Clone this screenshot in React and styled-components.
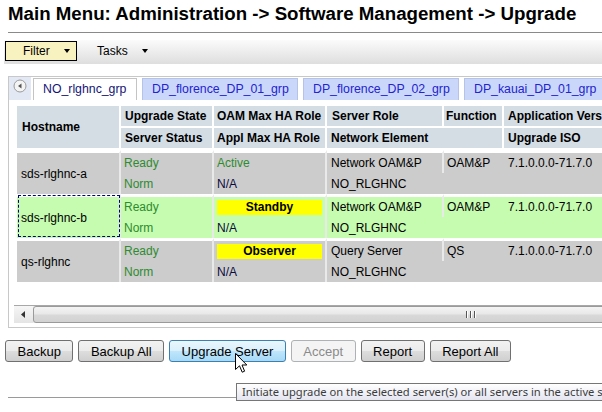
import styled, { createGlobalStyle } from "styled-components";

const GlobalStyle = createGlobalStyle`
  body {
    margin: 0;
    background: #fff;
    font-family: "Liberation Sans", Arial, sans-serif;
    font-size: 12px;
    color: #000;
  }
`;

const Page = styled.div`
  position: relative;
  width: 602px;
  height: 412px;
  overflow: hidden;
`;

const Title = styled.h1`
  margin: 0 0 0 8px;
  padding: 3px 0 7px 0;
  font-size: 18.7px;
  line-height: 22px;
  font-weight: bold;
  white-space: nowrap;
  border-bottom: 1px solid #8a8a8a;
`;

const Toolbar = styled.div`
  display: flex;
  align-items: flex-start;
  margin: 7px 0 0 4px;
  height: 24px;
  background: linear-gradient(#fbfbfb, #dedede);
`;

const MenuButton = styled.div`
  display: flex;
  align-items: center;
  box-sizing: border-box;
  height: 20px;
  margin: 1px 0 0 1px;
  width: ${(p) => p.$width}px;
  padding-left: ${(p) => p.$pad}px;
  border: 1px solid ${(p) => (p.$active ? "#000" : "transparent")};
  background: ${(p) => (p.$active ? "#f8f2c0" : "transparent")};
  font-size: 12px;
  gap: 14px;
`;

const Caret = styled.span`
  width: 0;
  height: 0;
  border-left: 3.5px solid transparent;
  border-right: 3.5px solid transparent;
  border-top: 4px solid #000;
`;

const Panel = styled.div`
  display: flex;
  flex-direction: column;
  box-sizing: border-box;
  height: 252px;
  margin: 12px 0 0 8px;
  border: 1px solid #c8c8c8;
  border-right: none;
  overflow: hidden;
`;

const TabStrip = styled.div`
  display: flex;
  align-items: flex-end;
  gap: 5px;
  height: 23px;
`;

const ScrollNub = styled.div`
  display: flex;
  justify-content: center;
  align-items: flex-start;
  flex-shrink: 0;
  width: 22px;
  height: 23px;
  margin-right: -3px;
  padding-top: 2px;
  box-sizing: border-box;
  background: #e3e8f5;
`;

const Tab = styled.div`
  box-sizing: border-box;
  height: 22px;
  width: ${(p) => p.$width}px;
  flex-shrink: 0;
  padding-left: 9px;
  line-height: 21px;
  font-size: 12.3px;
  white-space: nowrap;
  color: ${(p) => (p.$active ? "#141478" : "#2323d0")};
  background: ${(p) => (p.$active ? "#fff" : "#cad7fb")};
  border: 1px solid ${(p) => (p.$active ? "#c4c4c4" : "#b7c3e6")};
  border-bottom: none;
`;

const Grid = styled.table`
  table-layout: fixed;
  border-collapse: separate;
  border-spacing: 0;
  width: 627px;
  margin: 6px 0 0 8px;
`;

const Th = styled.th`
  height: 20px;
  padding: 0 0 0 ${(p) => p.$pad ?? 4}px;
  background: #d4dce4;
  border-right: 2px solid #fff;
  border-bottom: 2px solid #fff;
  text-align: left;
  font-size: 12px;
  font-weight: bold;
  white-space: nowrap;
  overflow: hidden;
`;

const Td = styled.td`
  height: ${(p) => (p.$first ? 20 : 21)}px;
  padding: 0 0 0 ${(p) => p.$pad ?? 4}px;
  background: ${(p) => (p.$tone === "green" ? "#c6fcb0" : "#cccccc")};
  border-top: ${(p) => (p.$first ? "3px solid #fff" : "none")};
  border-right: ${(p) => (p.$open ? "none" : "2px solid #e9e9e9")};
  color: ${(p) => p.$color || "#000"};
  font-size: 12px;
  white-space: nowrap;
  overflow: hidden;
  vertical-align: middle;
  outline: ${(p) => (p.$focus ? "1px dashed #000080" : "none")};
  outline-offset: -2px;
`;

const RoleBadge = styled.div`
  height: 15px;
  margin-right: 3px;
  background: #ffff00;
  text-align: center;
  font-weight: bold;
  line-height: 15px;
`;

const HScroll = styled.div`
  display: flex;
  height: 17px;
  margin: auto 0 4px 5px;
  background: #ececec;
  border-top: 1px solid #a8a8a8;
`;

const ScrollArrow = styled.div`
  display: flex;
  align-items: center;
  justify-content: center;
  width: 19px;
  flex-shrink: 0;
  background: linear-gradient(#f6f6f6, #e4e4e4);
`;

const ScrollThumb = styled.div`
  display: flex;
  align-items: center;
  justify-content: center;
  gap: 2px;
  width: 876px;
  flex-shrink: 0;
  box-sizing: border-box;
  border: 1px solid #9a9a9a;
  border-radius: 3px;
  background: linear-gradient(#f4f4f4 0%, #e8e8e8 45%, #d8d8d8 55%, #d2d2d2 100%);
`;

const GripLine = styled.span`
  width: 1px;
  height: 7px;
  background: #555;
  border-right: 1px solid #fff;
`;

const ButtonRow = styled.div`
  display: flex;
  gap: 5px;
  margin: 12px 0 0 5px;
`;

const Button = styled.button`
  box-sizing: border-box;
  height: 22px;
  padding: 0 11.5px;
  font-family: "Liberation Sans", Arial, sans-serif;
  font-size: 13px;
  border-radius: 3px;
  border: 1px solid ${(p) => (p.$hover ? "#3c7fb1" : p.disabled ? "#adb2b5" : "#707070")};
  color: ${(p) => (p.disabled ? "#8a8a8a" : "#000")};
  background: ${(p) =>
    p.$hover
      ? "linear-gradient(#eaf6fd 0%, #d9f0fc 50%, #bee6fd 51%, #a7d9f5 100%)"
      : p.disabled
      ? "#f4f4f4"
      : "linear-gradient(#f2f2f2 0%, #ebebeb 50%, #dddddd 51%, #cfcfcf 100%)"};
`;

const FooterRule = styled.div`
  margin: 35px 0 0 8px;
  border-top: 1px solid #9a9a9a;
`;

const Tooltip = styled.div`
  position: absolute;
  left: 236px;
  top: 383px;
  height: 18px;
  padding: 0 5px;
  box-sizing: border-box;
  border: 1px solid #767676;
  background: linear-gradient(#ffffff, #e4e5f0);
  font-family: "Noto Sans", "Open Sans", sans-serif;
  font-size: 11.2px;
  line-height: 16px;
  color: #3c3c3c;
  white-space: nowrap;
`;

const Cursor = styled.svg`
  position: absolute;
  left: 235px;
  top: 353px;
`;

const tabs = [
  { name: "NO_rlghnc_grp", width: 104, active: true },
  { name: "DP_florence_DP_01_grp", width: 156 },
  { name: "DP_florence_DP_02_grp", width: 156 },
  { name: "DP_kauai_DP_01_grp", width: 150 },
];

const servers = [
  { host: "sds-rlghnc-a", role: "Active", serverRole: "Network OAM&P", fn: "OAM&P", tone: "gray" },
  { host: "sds-rlghnc-b", role: "Standby", serverRole: "Network OAM&P", fn: "OAM&P", tone: "green", focus: true },
  { host: "qs-rlghnc", role: "Observer", serverRole: "Query Server", fn: "QS", tone: "gray" },
];

const GREEN = "#2e8b2e";
const NAVY = "#0b0b3c";

function ServerRows({ s }) {
  return (
    <>
      <tr>
        <Td rowSpan={2} $first $tone={s.tone} $focus={s.focus}>
          {s.host}
        </Td>
        <Td $first $tone={s.tone} $pad={3} $color={GREEN}>Ready</Td>
        <Td $first $tone={s.tone} $pad={3} $color={s.role === "Active" ? GREEN : "#000"}>
          {s.role === "Active" ? s.role : <RoleBadge>{s.role}</RoleBadge>}
        </Td>
        <Td $first $tone={s.tone}>{s.serverRole}</Td>
        <Td $first $tone={s.tone} $pad={3} $open>{s.fn}</Td>
        <Td $first $tone={s.tone} $open>7.1.0.0.0-71.7.0</Td>
      </tr>
      <tr>
        <Td $tone={s.tone} $pad={3} $color={GREEN}>Norm</Td>
        <Td $tone={s.tone} $pad={3} $color={NAVY}>N/A</Td>
        <Td colSpan={2} $tone={s.tone} $open>NO_RLGHNC</Td>
        <Td $tone={s.tone} $open></Td>
      </tr>
    </>
  );
}

export default function App() {
  return (
    <Page>
      <GlobalStyle />
      <Title>Main Menu: Administration -&gt; Software Management -&gt; Upgrade</Title>

      <Toolbar>
        <MenuButton $active $width={72} $pad={17}>
          Filter <Caret />
        </MenuButton>
        <MenuButton $width={70} $pad={18}>
          Tasks <Caret />
        </MenuButton>
      </Toolbar>

      <Panel>
        <TabStrip>
          <ScrollNub>
            <svg width="14" height="14" viewBox="0 0 14 14">
              <circle cx="7" cy="7" r="6" fill="#f4f4f4" stroke="#9a9a9a" />
              <path d="M8.5 4.5 L5 7 L8.5 9.5 Z" fill="#555" />
            </svg>
          </ScrollNub>
          {tabs.map((t) => (
            <Tab key={t.name} $active={t.active} $width={t.width}>
              {t.name}
            </Tab>
          ))}
        </TabStrip>

        <Grid>
          <colgroup>
            <col style={{ width: 104 }} />
            <col style={{ width: 93 }} />
            <col style={{ width: 113 }} />
            <col style={{ width: 117 }} />
            <col style={{ width: 60 }} />
            <col style={{ width: 140 }} />
          </colgroup>
          <thead>
            <tr>
              <Th rowSpan={2} $pad={5}>Hostname</Th>
              <Th>Upgrade State</Th>
              <Th $pad={3}>OAM Max HA Role</Th>
              <Th $pad={5}>Server Role</Th>
              <Th $pad={2}>Function</Th>
              <Th>Application Version</Th>
            </tr>
            <tr>
              <Th>Server Status</Th>
              <Th $pad={3}>Appl Max HA Role</Th>
              <Th colSpan={2} $pad={4}>Network Element</Th>
              <Th>Upgrade ISO</Th>
            </tr>
          </thead>
          <tbody>
            {servers.map((s) => (
              <ServerRows key={s.host} s={s} />
            ))}
          </tbody>
        </Grid>

        <HScroll>
          <ScrollArrow>
            <svg width="5" height="7" viewBox="0 0 5 7">
              <path d="M4 0 L0 3.5 L4 7 Z" fill="#333" />
            </svg>
          </ScrollArrow>
          <ScrollThumb>
            <GripLine />
            <GripLine />
            <GripLine />
          </ScrollThumb>
        </HScroll>
      </Panel>

      <ButtonRow>
        <Button>Backup</Button>
        <Button>Backup All</Button>
        <Button $hover>Upgrade Server</Button>
        <Button disabled>Accept</Button>
        <Button>Report</Button>
        <Button>Report All</Button>
      </ButtonRow>

      <FooterRule />

      <Tooltip>Initiate upgrade on the selected server(s) or all servers in the active server group.</Tooltip>

      <Cursor width="13" height="21" viewBox="0 0 13 21">
        <path
          d="M0.5 0.5 L0.5 16.5 L4.5 12.8 L7.2 19.2 L9.6 18.2 L7 12 L11.8 12 Z"
          fill="#fff"
          stroke="#000"
          strokeWidth="1"
          strokeLinejoin="round"
        />
      </Cursor>
    </Page>
  );
}
